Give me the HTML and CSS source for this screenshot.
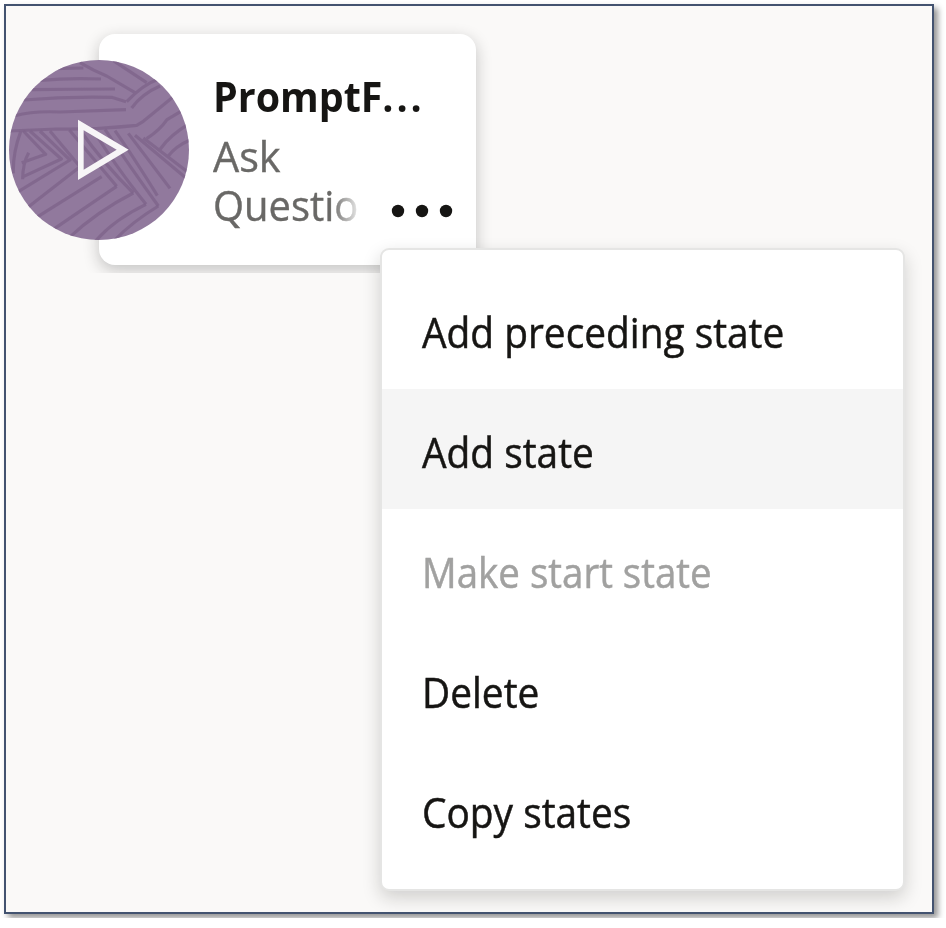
FILE: index.html
```html
<!DOCTYPE html>
<html lang="en">
<head>
<meta charset="utf-8">
<title>Flow designer</title>
<link rel="stylesheet" href="styles.css">
</head>
<body>
<main class="canvas">
  <article class="node">
    <div class="node-text">
      <h2 class="node-title"><span class="fit title-fit">PromptF<span class="dots">...</span></span></h2>
      <p class="node-type"><span class="line ask">Ask</span><span class="line">Questio</span></p>
    </div>
    <svg class="more" viewBox="0 0 62 14" aria-label="More"><circle cx="7" cy="7" r="6.2"/><circle cx="31" cy="7" r="6.2"/><circle cx="55" cy="7" r="6.2"/></svg>
  </article>
  <svg class="start" viewBox="27 30 540 540" aria-label="Start state">
    <defs><clipPath id="disc"><circle cx="297" cy="300" r="270"/></clipPath></defs>
    <circle cx="297" cy="300" r="270" fill="#91799d"/>
    <g class="grain" clip-path="url(#disc)">
      <path d="M160 56L250 54M120 91Q210 83 303 87M95 119Q220 117 345 117M70 150Q200 139 335 142L378 155M45 197Q100 182 180 186L378 179M25 243L170 237Q290 239 410 226L430 214L520 140M240 38Q280 62 320 78L405 128M340 32L440 98M380 155Q430 103 475 88M395 174Q425 132 480 108"/>
      <path d="M440 266Q480 240 501 209L558 175M481 297Q510 255 570 220M505 318Q530 285 575 268M430 264L570 371M405 256L565 390M385 250L510 415M345 242Q400 320 472 437M315 238Q390 350 475 468M280 240Q340 340 438 463M240 240Q310 340 400 429M208 240L350 409"/>
      <path d="M70 243L137 313L65 338M90 243L184 327L65 382M120 243L210 330L50 428M150 243L240 350L80 475M62 245Q38 310 40 370M86 308Q68 340 68 388M305 380L105 505M350 409Q230 490 150 545M400 429Q290 485 205 565M438 463Q340 510 285 575M475 468Q390 520 340 575"/>
    </g>
    <path class="play" fill-rule="evenodd" d="M234 209L386 299L234 390ZM251 241V359L350 299Z"/>
  </svg>
  <ul class="menu">
    <li class="item"><span class="fit">Add preceding state</span></li>
    <li class="item active"><span class="fit">Add state</span></li>
    <li class="item disabled"><span class="fit">Make start state</span></li>
    <li class="item"><span class="fit">Delete</span></li>
    <li class="item"><span class="fit">Copy states</span></li>
  </ul>
</main>
</body>
</html>
```
FILE: styles.css
```css
* { box-sizing: border-box; }
body { margin: 0; padding: 4px; background: #fff; font-family: "Open Sans", "Noto Sans", sans-serif; color: #161513; }
.canvas { position: relative; width: 930px; height: 910px; border: 2px solid #435370; background: #faf9f8; box-shadow: 4px 4px 6px rgba(0,0,0,.42); }
.node { position: absolute; left: 93px; top: 28px; width: 377px; height: 231px; padding: 37px 24px 0 114px; background: #fff; border-radius: 16px; box-shadow: 0 5px 16px rgba(22,21,19,.24); clip-path: inset(-16px -16px -8px -16px); }
.node-title { margin: 0; height: 50px; font-size: 42px; line-height: 50px; font-weight: 700; }
.dots { letter-spacing: 3px; }
.node-type { margin: 10px 0 0; width: 146px; font-size: 42px; line-height: 49px; color: #696866; -webkit-text-stroke: .4px #696866; -webkit-mask-image: linear-gradient(90deg, #000 118px, transparent 150px); mask-image: linear-gradient(90deg, #000 118px, transparent 150px); }
.line { display: block; width: max-content; height: 49px; transform: scaleX(.95); transform-origin: 0 50%; }
.ask { transform: scaleX(.985); }
.more { position: absolute; right: 23px; bottom: 47px; width: 62px; height: 14px; fill: #161513; }
.start { position: absolute; left: 3px; top: 54px; width: 180px; height: 180px; }
.grain { fill: none; stroke: #7e648b; stroke-width: 9.5; stroke-opacity: .8; stroke-linejoin: round; }
.play { fill: #f7f5f7; }
.menu { position: absolute; left: 374px; top: 242px; width: 525px; height: 643px; margin: 0; padding: 19px 0; list-style: none; border: 2px solid #e5e5e4; border-radius: 9px; background: #fff; box-shadow: 0 7px 18px rgba(22,21,19,.18); }
.item { display: flex; align-items: center; height: 120px; padding: 6px 40px 0; font-size: 42px; line-height: 60px; font-weight: 500; white-space: nowrap; -webkit-text-stroke: .5px currentColor; }
.active { background: #f5f5f5; }
.disabled { color: #a1a1a0; }
.fit { display: inline-block; white-space: nowrap; transform: scaleX(.925); transform-origin: 0 50%; }
.disabled .fit { transform: scaleX(.917); }
.title-fit { transform: scaleX(.938); }
```
